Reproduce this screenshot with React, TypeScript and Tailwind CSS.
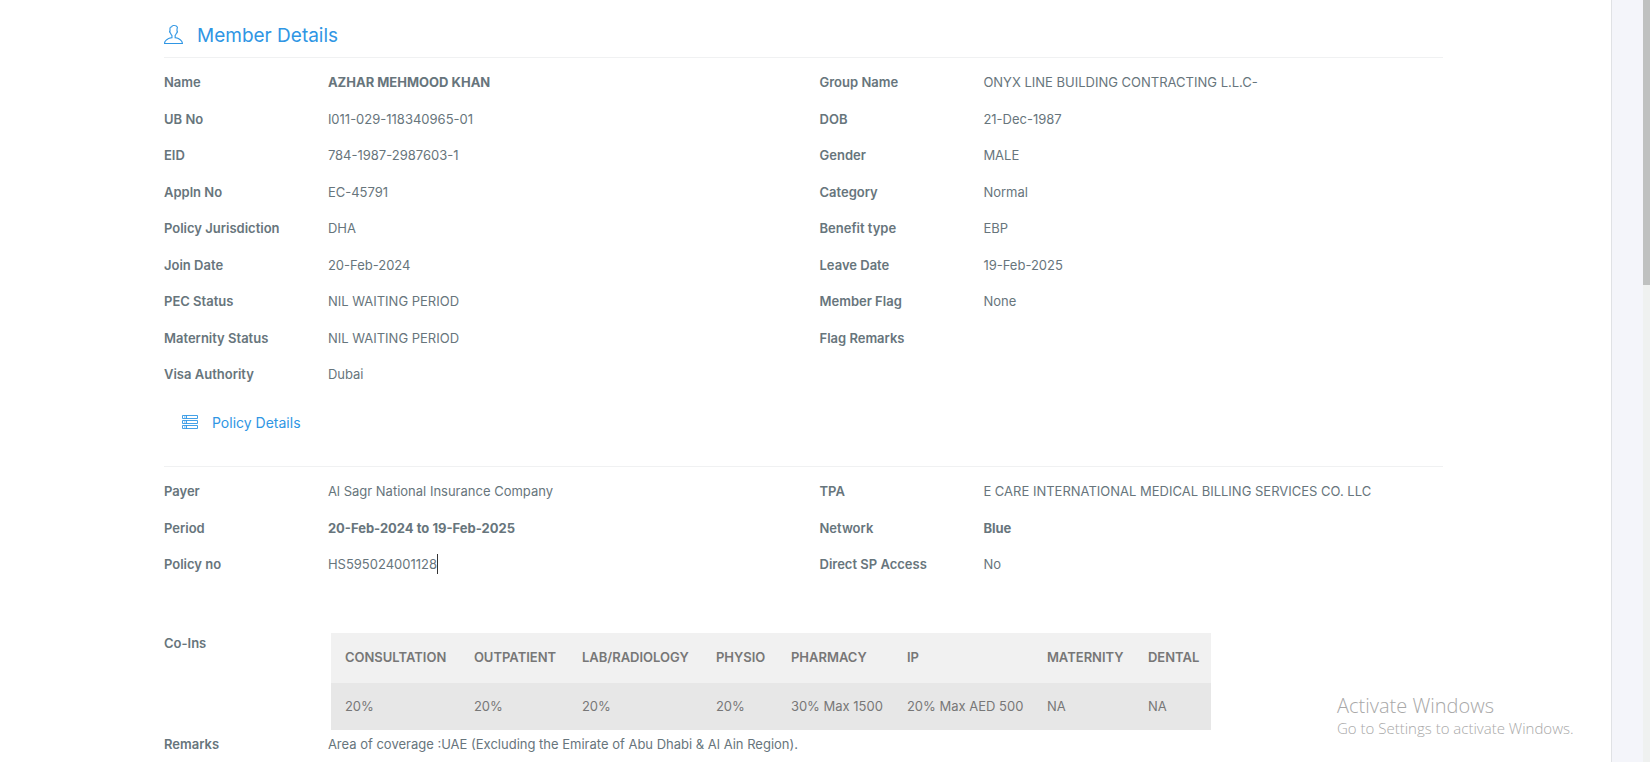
import { TfiUser } from 'react-icons/tfi';

type Field = { label: string; value: string; bold?: boolean; caret?: boolean };

const memberLeft: Field[] = [
  { label: 'Name', value: 'AZHAR MEHMOOD KHAN', bold: true },
  { label: 'UB No', value: 'I011-029-118340965-01' },
  { label: 'EID', value: '784-1987-2987603-1' },
  { label: 'Appln No', value: 'EC-45791' },
  { label: 'Policy Jurisdiction', value: 'DHA' },
  { label: 'Join Date', value: '20-Feb-2024' },
  { label: 'PEC Status', value: 'NIL WAITING PERIOD' },
  { label: 'Maternity Status', value: 'NIL WAITING PERIOD' },
  { label: 'Visa Authority', value: 'Dubai' },
];

const memberRight: Field[] = [
  { label: 'Group Name', value: 'ONYX LINE BUILDING CONTRACTING L.L.C-' },
  { label: 'DOB', value: '21-Dec-1987' },
  { label: 'Gender', value: 'MALE' },
  { label: 'Category', value: 'Normal' },
  { label: 'Benefit type', value: 'EBP' },
  { label: 'Leave Date', value: '19-Feb-2025' },
  { label: 'Member Flag', value: 'None' },
  { label: 'Flag Remarks', value: '' },
];

const policyLeft: Field[] = [
  { label: 'Payer', value: 'Al Sagr National Insurance Company' },
  { label: 'Period', value: '20-Feb-2024 to 19-Feb-2025', bold: true },
  { label: 'Policy no', value: 'HS595024001128', caret: true },
];

const policyRight: Field[] = [
  { label: 'TPA', value: 'E CARE INTERNATIONAL MEDICAL BILLING SERVICES CO. LLC' },
  { label: 'Network', value: 'Blue', bold: true },
  { label: 'Direct SP Access', value: 'No' },
];

const coIns = [
  { name: 'CONSULTATION', value: '20%', width: 129 },
  { name: 'OUTPATIENT', value: '20%', width: 108 },
  { name: 'LAB/RADIOLOGY', value: '20%', width: 134 },
  { name: 'PHYSIO', value: '20%', width: 75 },
  { name: 'PHARMACY', value: '30% Max 1500', width: 116 },
  { name: 'IP', value: '20% Max AED 500', width: 140 },
  { name: 'MATERNITY', value: 'NA', width: 101 },
  { name: 'DENTAL', value: 'NA', width: 77 },
];

function FieldList({ fields }: { fields: Field[] }) {
  return (
    <dl className="w-1/2">
      {fields.map((field) => (
        <div key={field.label} className="flex h-9 items-center even:h-[37px]">
          <dt className="w-1/4 shrink-0 font-semibold">{field.label}</dt>
          <dd className={field.bold ? 'flex font-bold' : 'flex'}>
            {field.value}
            {field.caret && <span className="h-5 w-px bg-[#333]" />}
          </dd>
        </div>
      ))}
    </dl>
  );
}

function ListIcon({ className }: { className: string }) {
  return (
    <svg viewBox="0 0 16 14" className={className} fill="none" stroke="currentColor" aria-hidden="true">
      <path d="M.5.5h15v3H.5zM.5 5.5h15v3H.5zM.5 10.5h15v3H.5zM4.5.5v3M4.5 5.5v3M4.5 10.5v3" strokeWidth="0.9" />
      <path d="M2 2h1.5M2 7h1.5M2 12h1.5" strokeWidth="0.8" />
    </svg>
  );
}

export default function App() {
  return (
    <div className="relative flex min-h-screen bg-[#f4f5fa] font-['Inter',sans-serif] text-[13px] leading-5 text-[#67757c]">
      <main className="flex-1 border-r border-[#e0e2e5] bg-white pl-[164px] pr-[136px]">
        <h2 className="mr-8 flex h-[58px] items-center border-b border-[#f0f1f2] pt-[14px] text-[19px] text-[#2f96e4]">
          <TfiUser className="mb-[2px] mr-[14px] size-[19px]" />
          Member Details
        </h2>
        <section className="flex pt-[6px]">
          <FieldList fields={memberLeft} />
          <FieldList fields={memberRight} />
        </section>

        <h3 className="mr-8 flex h-[75px] items-center border-b border-[#f0f1f2] pb-3 pl-[18px] text-sm text-[#2f96e4]">
          <ListIcon className="mb-[2px] mr-[14px] h-[14px] w-4" />
          Policy Details
        </h3>
        <section className="flex pt-[6px]">
          <FieldList fields={policyLeft} />
          <FieldList fields={policyRight} />
        </section>

        <section className="flex pt-[51px]">
          <div className="w-1/8 shrink-0 font-semibold">Co-Ins</div>
          <table className="ml-[3px] table-fixed text-left text-[#777]">
            <colgroup>
              {coIns.map((col) => (
                <col key={col.name} style={{ width: col.width }} />
              ))}
            </colgroup>
            <thead>
              <tr className="h-[50px] bg-[#f1f1f1]">
                {coIns.map((col) => (
                  <th key={col.name} className="whitespace-nowrap pb-[2px] pl-[14px] font-semibold">{col.name}</th>
                ))}
              </tr>
            </thead>
            <tbody>
              <tr className="h-[47px] bg-[#e7e7e7]">
                {coIns.map((col) => (
                  <td key={col.name} className="whitespace-nowrap pb-[2px] pl-[14px]">{col.value}</td>
                ))}
              </tr>
            </tbody>
          </table>
        </section>
        <section className="flex pt-1">
          <div className="w-1/8 shrink-0 font-semibold">Remarks</div>
          <p>Area of coverage :UAE (Excluding the Emirate of Abu Dhabi &amp; Al Ain Region).</p>
        </section>
      </main>

      <aside className="ml-[31px] w-[7px] bg-[#eff1f0]">
        <div className="h-[285px] bg-[#bfc1c0]" />
      </aside>

      <div className="pointer-events-none absolute right-[76px] bottom-6 w-[237px] whitespace-nowrap font-['Open_Sans',sans-serif] font-light text-[#a8a8a8]">
        <p className="text-[20px] leading-6">Activate Windows</p>
        <p className="text-[15px]">Go to Settings to activate Windows.</p>
      </div>
    </div>
  );
}
